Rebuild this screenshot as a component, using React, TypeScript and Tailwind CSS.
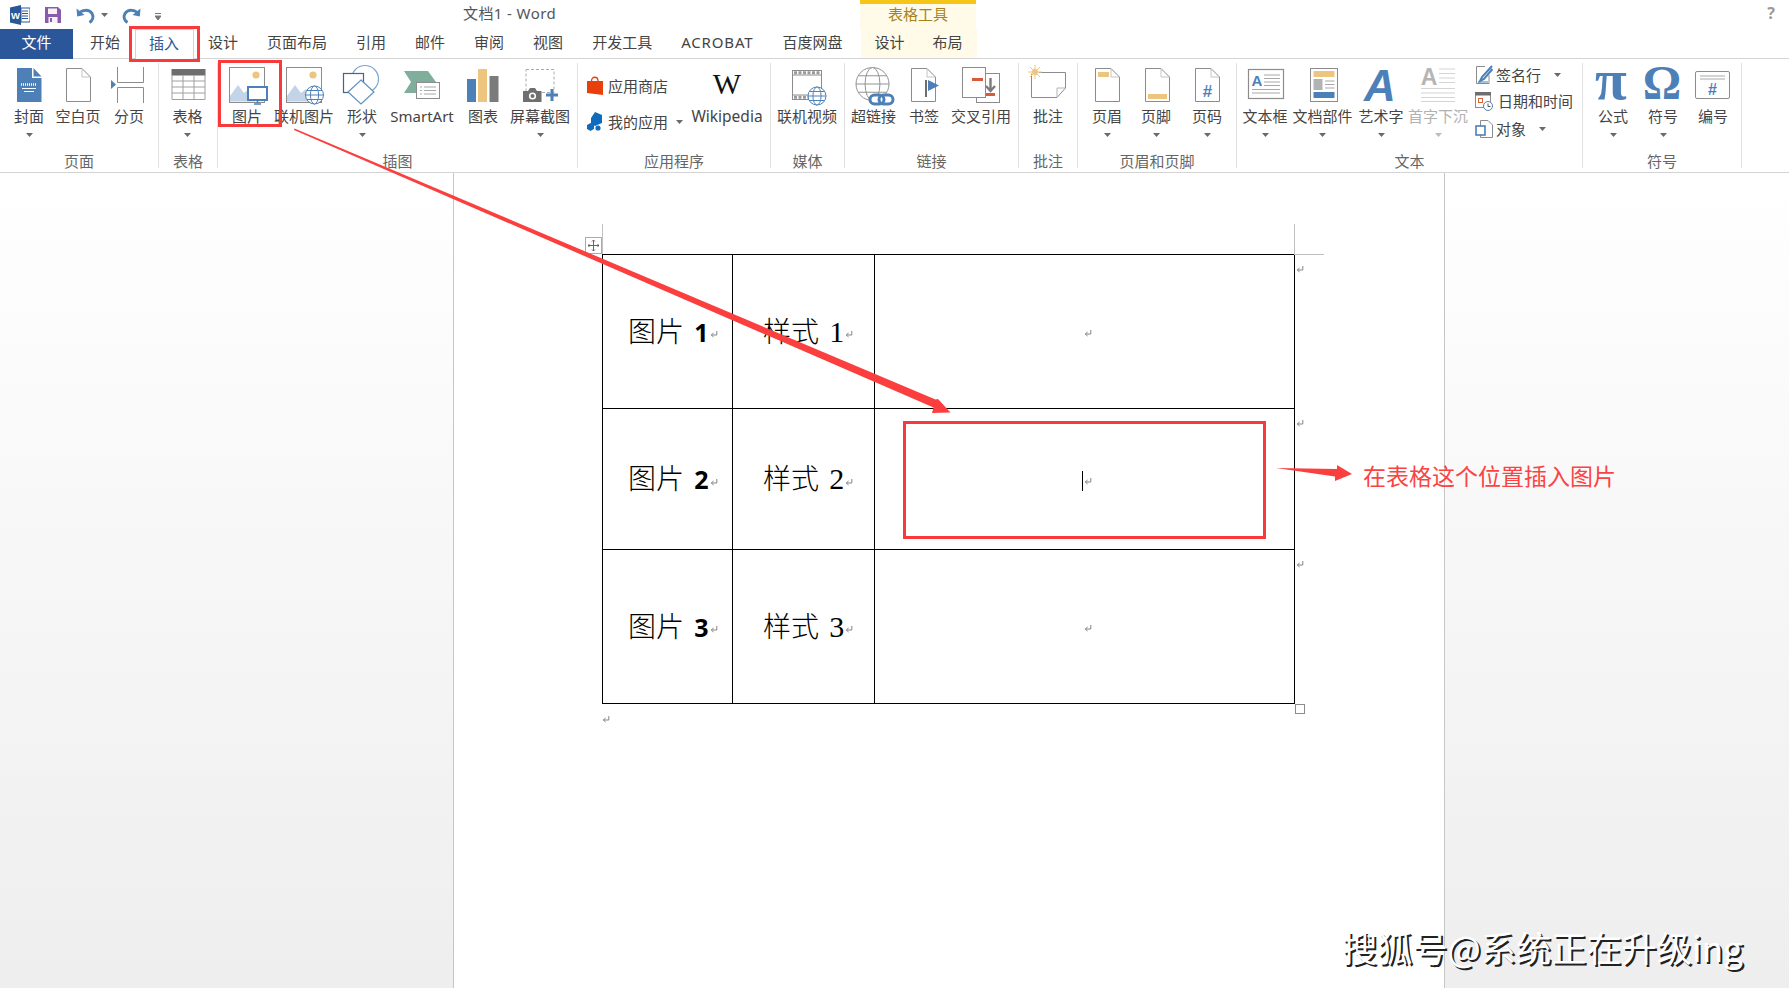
import type { ReactNode } from 'react';

const BLUE = '#4e80b8';
const GRAY = '#8c8c8c';
const GOLD = '#edc57f';

function Ico({ children }: { children: ReactNode }) {
  return (
    <svg width="44" height="44" viewBox="0 0 44 44" fill="none" className="flex-none overflow-visible">
      {children}
    </svg>
  );
}

function Globe({ cx, cy, r, color }: { cx: number; cy: number; r: number; color: string }) {
  return (
    <g stroke={color} strokeWidth="1" fill="white">
      <circle cx={cx} cy={cy} r={r} />
      <ellipse cx={cx} cy={cy} rx={r * 0.45} ry={r} />
      <path d={`M${cx - r} ${cy}H${cx + r}M${cx - r * 0.85} ${cy - r * 0.5}H${cx + r * 0.85}M${cx - r * 0.85} ${cy + r * 0.5}H${cx + r * 0.85}`} />
    </g>
  );
}

function Doc({ x, y = 4, w = 25, h = 34 }: { x: number; y?: number; w?: number; h?: number }) {
  return (
    <>
      <path d={`M${x + 0.5} ${y + 0.5}H${x + w - 9}L${x + w - 0.5} ${y + 9}V${y + h - 0.5}H${x + 0.5}Z`} stroke={GRAY} fill="white" />
      <path d={`M${x + w - 9} ${y + 0.5}V${y + 9}H${x + w - 0.5}`} stroke="#c4c4c4" />
    </>
  );
}

function Picture() {
  return (
    <>
      <rect x="4.5" y="3.5" width="35" height="35" stroke={GRAY} fill="white" />
      <circle cx="31" cy="11" r="3.6" fill={GOLD} />
      <path d="M5 37.5V32L13 21L19 29L24 25L30 37.5Z" fill="#c3d4e8" />
    </>
  );
}

const icons: Record<string, ReactNode> = {
  cover: (
    <Ico>
      <path d="M10 4H25V14H34.5V38H10Z" fill={BLUE} />
      <path d="M26.5 4L34.5 12.5H26.5Z" fill={BLUE} />
      <path d="M14 20.5H30" stroke="white" strokeWidth="2.4" strokeDasharray="1 1" />
      <path d="M15 24.5H29M17 27.5H27" stroke="white" />
    </Ico>
  ),
  blank: <Ico><Doc x={10} /></Ico>,
  pageBreak: (
    <Ico>
      <path d="M10.5 3V18.5H36.5V3M10.5 39V23.5H36.5V39" stroke={GRAY} />
      <path d="M4 16L9 20.5L4 25Z" fill={BLUE} />
    </Ico>
  ),
  table: (
    <Ico>
      <rect x="5.5" y="5" width="34" height="31" fill="white" />
      <rect x="5.5" y="5" width="34" height="6.5" fill="#6e6e6e" />
      <path d="M6 11V35.5H39V11M17 11V35.5M28 11V35.5M6 17H39M6 23H39M6 29H39" stroke="#a0a0a0" />
    </Ico>
  ),
  picture: (
    <Ico>
      <Picture />
      <rect x="23" y="23" width="19" height="13" fill="white" stroke={BLUE} strokeWidth="2" />
      <path d="M32.5 36V39M29 40H36" stroke={BLUE} strokeWidth="1.6" />
    </Ico>
  ),
  onlinePicture: (
    <Ico>
      <Picture />
      <Globe cx={32.5} cy={31} r={9} color={BLUE} />
    </Ico>
  ),
  shapes: (
    <Ico>
      <circle cx="25" cy="15" r="13.5" stroke="#7aa6d0" strokeWidth="1.2" fill="white" />
      <rect x="3.5" y="9.5" width="20" height="19" stroke="#3e6690" strokeWidth="1.2" fill="white" />
      <path d="M21 16L34 28L21 40L8 28Z" stroke="#5f90c2" strokeWidth="1.2" fill="white" />
    </Ico>
  ),
  smartArt: (
    <Ico>
      <path d="M4 7H28L36 18L28 29H4L11 18Z" fill="#7fae9c" />
      <rect x="16.5" y="18.5" width="23" height="16" fill="white" stroke={GRAY} />
      <path d="M20 23H22M24 23H36M20 26.5H22M24 26.5H36M20 30H22M24 30H36" stroke="#a8a8a8" />
    </Ico>
  ),
  chart: (
    <Ico>
      <rect x="6" y="15" width="9" height="23" fill={BLUE} />
      <rect x="17" y="5" width="9" height="33" fill={GOLD} />
      <rect x="28.5" y="12" width="9" height="26" fill="#7b7b7b" />
    </Ico>
  ),
  screenshot: (
    <Ico>
      <rect x="8" y="5.5" width="28" height="23" stroke="#ababab" strokeDasharray="3 2" />
      <path d="M5 27H10L12 24H17L19 27H23.5V38H5Z" fill="#6f6f6f" />
      <circle cx="14.5" cy="32" r="3.6" fill="white" />
      <circle cx="14.5" cy="32" r="2" fill="#6f6f6f" />
      <path d="M34 25V37M28 31H40" stroke={BLUE} strokeWidth="3" />
    </Ico>
  ),
  video: (
    <Ico>
      <rect x="7.5" y="6.5" width="29" height="29" fill="white" stroke={GRAY} />
      <path d="M8 11H36M8 31H36" stroke={GRAY} />
      <path d="M9 8.8H36M9 33.2H36" stroke="#9a9a9a" strokeWidth="3" strokeDasharray="3 1.5" />
      <Globe cx={32} cy={32} r={9} color={BLUE} />
    </Ico>
  ),
  link: (
    <Ico>
      <Globe cx={20.5} cy={20} r={16.5} color="#939393" />
      <rect x="18" y="31" width="14" height="9" rx="4.5" fill="white" stroke={BLUE} strokeWidth="3" />
      <rect x="27" y="31" width="14" height="9" rx="4.5" fill="none" stroke={BLUE} strokeWidth="3" />
    </Ico>
  ),
  bookmark: (
    <Ico>
      <Doc x={9} />
      <path d="M24 16V33" stroke="#6e6e6e" strokeWidth="2" />
      <path d="M26 16L37 21.5L26 27Z" fill={BLUE} />
    </Ico>
  ),
  crossRef: (
    <Ico>
      <rect x="17.5" y="9.5" width="23" height="29" fill="white" stroke={GRAY} />
      <rect x="3.5" y="3.5" width="23" height="30" fill="white" stroke={GRAY} />
      <rect x="13" y="14" width="11" height="3" fill="#d9593d" />
      <rect x="27" y="29" width="9" height="3" fill="#d9593d" />
      <path d="M31.5 14V26M27 22L31.5 27L36 22" stroke="#7b7b7b" strokeWidth="2.4" />
    </Ico>
  ),
  comment: (
    <Ico>
      <path d="M5.5 8.5H39.5V24L31 33.5H5.5Z" fill="white" stroke={GRAY} />
      <path d="M39 24H31V33" stroke="#b4b4b4" />
      <circle cx="9" cy="8" r="3.6" fill={GOLD} stroke="white" />
      <path d="M9 1V15M2 8H16M4 3L14 13M14 3L4 13" stroke={GOLD} />
    </Ico>
  ),
  header: (
    <Ico>
      <Doc x={10} />
      <rect x="13" y="8" width="11" height="5" fill={GOLD} />
    </Ico>
  ),
  footer: (
    <Ico>
      <Doc x={11} />
      <rect x="14" y="30" width="19" height="5" fill={GOLD} />
    </Ico>
  ),
  pageNumber: (
    <Ico>
      <Doc x={10} />
      <text x="22.5" y="33" fontSize="17" fontWeight="700" textAnchor="middle" fill={BLUE} fontFamily="'Liberation Sans', sans-serif">#</text>
    </Ico>
  ),
  textBox: (
    <Ico>
      <rect x="5.5" y="5.5" width="35" height="29" fill="white" stroke={GRAY} strokeWidth="1.2" />
      <text x="14" y="22" fontSize="15" fontWeight="700" textAnchor="middle" fill={BLUE} fontFamily="'Liberation Sans', sans-serif">A</text>
      <path d="M21 11H37M21 14.5H37M21 18H37M21 21.5H37M9 25.5H37M9 29H37" stroke="#a8a8a8" />
    </Ico>
  ),
  quickParts: (
    <Ico>
      <rect x="9.5" y="4.5" width="27" height="33" fill="white" stroke={GRAY} />
      <rect x="12.5" y="7" width="21" height="6" fill={GOLD} />
      <rect x="12.5" y="15" width="9" height="11" fill="#b3b3b3" />
      <path d="M24 17H33.5M24 20.5H33.5M24 24H33.5" stroke="#a8a8a8" />
      <rect x="12.5" y="28" width="21" height="6" fill={BLUE} />
    </Ico>
  ),
  wordArt: (
    <Ico>
      <text x="21" y="37" fontSize="44" fontWeight="700" fontStyle="italic" textAnchor="middle" fill={BLUE} fontFamily="'Liberation Sans', sans-serif">A</text>
    </Ico>
  ),
  dropCap: (
    <Ico>
      <text x="13" y="21" fontSize="23" fontWeight="700" textAnchor="middle" fill="#b5b5b5" fontFamily="'Liberation Sans', sans-serif">A</text>
      <path d="M23 5H39M23 9.5H39M23 14H39M23 18.5H39M5 24.5H39M5 29H39M5 33.5H39M5 37.5H39" stroke="#d4d4d4" />
    </Ico>
  ),
  equation: (
    <Ico>
      <text x="20" y="35" fontSize="58" fontWeight="700" textAnchor="middle" fill={BLUE} fontFamily="'Liberation Serif', serif">π</text>
    </Ico>
  ),
  symbol: (
    <Ico>
      <text x="21" y="35" fontSize="48" fontWeight="700" textAnchor="middle" fill={BLUE} fontFamily="'Liberation Serif', serif">Ω</text>
    </Ico>
  ),
  number: (
    <Ico>
      <rect x="4.5" y="7.5" width="34" height="27" rx="1.5" fill="white" stroke={GRAY} />
      <path d="M9 12H34M9 15H34" stroke="#a8a8a8" />
      <text x="21.5" y="31" fontSize="16" fontWeight="700" textAnchor="middle" fill={BLUE} fontFamily="'Liberation Sans', sans-serif">#</text>
    </Ico>
  ),
};

function Caret({ light }: { light?: boolean }) {
  return (
    <svg width="7" height="4" viewBox="0 0 7 4" className="flex-none">
      <path d="M0 0H7L3.5 4Z" fill={light ? '#bdbdbd' : '#6a6a6a'} />
    </svg>
  );
}

function Btn({ icon, label, caret, disabled, className }: { icon: string; label: string; caret?: boolean; disabled?: boolean; className: string }) {
  return (
    <div className={`flex flex-none flex-col items-center pt-px ${className}`}>
      {icons[icon]}
      <span className={`-mt-[2px] h-[20px] whitespace-nowrap leading-[20px] ${disabled ? 'text-[#b1b1b1]' : ''}`}>{label}</span>
      {caret && (
        <span className="mt-[7px] flex">
          <Caret light={disabled} />
        </span>
      )}
    </div>
  );
}

function Group({ label, className, pad = '', children }: { label: string; className: string; pad?: string; children: ReactNode }) {
  return (
    <div className={`mt-[4px] flex h-[105px] flex-none flex-col border-r border-[#e1e1e1] ${className}`}>
      <div className={`flex flex-1 ${pad}`}>{children}</div>
      <div className="-mb-[3px] h-[20px] text-center leading-[20px] text-[#666666]">{label}</div>
    </div>
  );
}

function ReturnMark({ className = '' }: { className?: string }) {
  return (
    <svg width="8" height="8" viewBox="0 0 8 8" fill="none" className={className}>
      <path d="M6.8 1V5H1.5M3.6 3L1.2 5L3.6 7" stroke="#858585" />
    </svg>
  );
}

const tabs = [
  { label: '开始' },
  { label: '插入', active: true },
  { label: '设计' },
  { label: '页面布局' },
  { label: '引用' },
  { label: '邮件' },
  { label: '审阅' },
  { label: '视图' },
  { label: '开发工具' },
  { label: 'ACROBAT', wide: true },
  { label: '百度网盘' },
];

const rows = [
  { name: '图片', style: '样式', n: '1', h: 'h-[154px]' },
  { name: '图片', style: '样式', n: '2', h: 'h-[141px]' },
  { name: '图片', style: '样式', n: '3', h: 'h-[154px]' },
];

export default function App() {
  return (
    <div className="relative flex h-[988px] w-full flex-col overflow-hidden bg-white font-['Noto_Sans','Noto_Sans_CJK_SC',sans-serif] text-[15px] text-[#444444]">
      {/* Title bar */}
      <div className="flex h-[29px] flex-none">
        <div className="flex w-[463px] flex-none items-center pl-[10px]">
          <svg width="20" height="20" viewBox="0 0 20 20">
            <path d="M0 2.5L11 0V20L0 17.5Z" fill="#2b579a" />
            <path d="M11 3H20V17H11Z" fill="white" stroke="#2b579a" />
            <path d="M12 6H18M12 8.5H18M12 11H18M12 13.5H18" stroke="#2b579a" />
            <text x="5.5" y="14" fontSize="9.5" fontWeight="700" textAnchor="middle" fill="white" fontFamily="'Liberation Sans', sans-serif">W</text>
          </svg>
          <svg width="16" height="16" viewBox="0 0 16 16" className="ml-[15px]">
            <path d="M0 0H13L16 3V16H0Z" fill="#8a5bab" />
            <rect x="3" y="1.5" width="9" height="5.5" fill="#f3f3f3" />
            <rect x="3.5" y="10" width="9" height="6" fill="#f3f3f3" />
            <rect x="5" y="11" width="2" height="4" fill="#8a5bab" />
          </svg>
          <svg width="20" height="18" viewBox="0 0 20 18" fill="none" className="ml-[15px]">
            <path d="M2.5 8C5.5 3.5 13 3 16 7.5C18 11 16.5 14.5 13.5 16.5" stroke={BLUE} strokeWidth="3" />
            <path d="M0.5 2.5L1.2 10.5L8.5 9Z" fill={BLUE} />
          </svg>
          <span className="ml-[5px] flex"><Caret /></span>
          <svg width="20" height="18" viewBox="0 0 20 18" fill="none" className="ml-[13px]">
            <path d="M17.5 8C14.5 3.5 7 3 4 7.5C2 11 3.5 14.5 6.5 16.5" stroke={BLUE} strokeWidth="3" />
            <path d="M19.5 2.5L18.8 10.5L11.5 9Z" fill={BLUE} />
          </svg>
          <svg width="6" height="8" viewBox="0 0 6 8" className="ml-[14px] mt-[4px]">
            <path d="M0 0.5H6M0 3H6L3 7Z" stroke="#777777" strokeWidth="1" fill="#777777" />
          </svg>
        </div>
        <div className="w-[397px] flex-none text-[15px] leading-[27px] tracking-[0.4px] text-[#555555]">文档1 - Word</div>
        <div className="h-[29px] w-[116px] flex-none border-t-[4px] border-[#f5c518] bg-[#fffbe8] text-center text-[15px] leading-[20px] text-[#a8811a]">表格工具</div>
        <div className="flex-1 pr-[14px] text-right text-[16px] font-bold leading-[26px] text-[#9a9a9a]">?</div>
      </div>

      {/* Tabs */}
      <div className="relative z-10 flex h-[30px] flex-none text-[15px] leading-[26px]">
        <div className="w-[73px] flex-none bg-[#2b579a] text-center text-white">文件</div>
        <div className="w-[2.5px] flex-none" />
        {tabs.map((t) =>
          t.active ? (
            <div key={t.label} className="h-[30px] flex-none border-x border-t border-[#d4d4d4] bg-white px-[13.5px] text-[#2b579a]">
              {t.label}
            </div>
          ) : (
            <div key={t.label} className={`flex-none px-[14.5px] ${t.wide ? 'tracking-[0.85px]' : ''}`}>
              {t.label}
            </div>
          ),
        )}
        <div className="w-[3.5px] flex-none" />
        <div className="flex h-[29px] w-[116px] flex-none bg-[#fffbe8]">
          <div className="w-[58px] text-center">设计</div>
          <div className="w-[58px] text-center">布局</div>
        </div>
      </div>

      {/* Ribbon */}
      <div className="-mt-px flex h-[115px] flex-none border-y border-[#d4d4d4] bg-white">
        <Group label="页面" className="w-[159px]" pad="pl-[4px]">
          <Btn icon="cover" label="封面" caret className="w-[50px]" />
          <Btn icon="blank" label="空白页" className="w-[48px]" />
          <Btn icon="pageBreak" label="分页" className="w-[54px]" />
        </Group>
        <Group label="表格" className="w-[59px]">
          <Btn icon="table" label="表格" caret className="w-[57px]" />
        </Group>
        <Group label="插图" className="w-[360px]" pad="pl-[1px]">
          <Btn icon="picture" label="图片" className="w-[56px]" />
          <Btn icon="onlinePicture" label="联机图片" className="w-[58px]" />
          <Btn icon="shapes" label="形状" caret className="w-[58px]" />
          <Btn icon="smartArt" label="SmartArt" className="w-[62px]" />
          <Btn icon="chart" label="图表" className="w-[60px]" />
          <Btn icon="screenshot" label="屏幕截图" caret className="w-[54px]" />
        </Group>
        <Group label="应用程序" className="w-[193px]" pad="pl-[9px]">
          <div className="flex w-[100px] flex-none flex-col gap-[16px] pt-[13px]">
            <div className="flex h-[20px] items-center gap-[5px] leading-[20px]">
              <svg width="16" height="20" viewBox="0 0 16 20" className="flex-none">
                <path d="M4.5 5C4.5 0 11 0 11 5" fill="none" stroke="#e8400c" strokeWidth="1.3" />
                <path d="M0 5H16V19L0 17Z" fill="#e8400c" />
              </svg>
              应用商店
            </div>
            <div className="flex h-[20px] items-center gap-[5px] leading-[20px]">
              <svg width="16" height="20" viewBox="0 0 16 20" className="flex-none">
                <path d="M8 0L15 3V11L8 14L4 12V6Z" fill="#0f6cbd" />
                <path d="M3.5 11L7 13V17L3.5 19L0 17V13Z" fill="#0f6cbd" />
                <circle cx="11" cy="16" r="2.6" fill="#0f6cbd" />
              </svg>
              我的应用
              <span className="ml-[3px] flex"><Caret /></span>
            </div>
          </div>
          <div className="flex w-[80px] flex-none flex-col items-center">
            <span className="mt-[4px] h-[39px] font-['Liberation_Serif',serif] text-[30px] leading-[34px] text-[#111111]">W</span>
            <span className="h-[20px] text-[15.5px] leading-[20px]">Wikipedia</span>
          </div>
        </Group>
        <Group label="媒体" className="w-[74px]">
          <Btn icon="video" label="联机视频" className="w-[72px]" />
        </Group>
        <Group label="链接" className="w-[174px]" pad="pl-[1px]">
          <Btn icon="link" label="超链接" className="w-[55px]" />
          <Btn icon="bookmark" label="书签" className="w-[46px]" />
          <Btn icon="crossRef" label="交叉引用" className="w-[68px]" />
        </Group>
        <Group label="批注" className="w-[59px]">
          <Btn icon="comment" label="批注" className="w-[58px]" />
        </Group>
        <Group label="页眉和页脚" className="w-[159px]" pad="pl-[4px]">
          <Btn icon="header" label="页眉" caret className="w-[50px]" />
          <Btn icon="footer" label="页脚" caret className="w-[48px]" />
          <Btn icon="pageNumber" label="页码" caret className="w-[54px]" />
        </Group>
        <Group label="文本" className="w-[346px]" pad="pl-[1px]">
          <Btn icon="textBox" label="文本框" caret className="w-[54px]" />
          <Btn icon="quickParts" label="文档部件" caret className="w-[61px]" />
          <Btn icon="wordArt" label="艺术字" caret className="w-[56px]" />
          <Btn icon="dropCap" label="首字下沉" caret disabled className="w-[58px]" />
          <div className="ml-[8px] flex flex-none flex-col gap-[6px] pt-[2px]">
            <div className="flex h-[20px] items-center gap-[3px] leading-[20px]">
              <svg width="18" height="20" viewBox="0 0 18 20" fill="none" className="flex-none">
                <path d="M10 1.5H1.5V18.5H14V10" stroke={GRAY} />
                <path d="M17 1L7 12L5 16L9 14L17.5 4" stroke={BLUE} strokeWidth="2" />
                <path d="M3 17H13" stroke={BLUE} />
              </svg>
              签名行
              <span className="ml-[10px] flex"><Caret /></span>
            </div>
            <div className="flex h-[20px] items-center gap-[5px] leading-[20px]">
              <svg width="18" height="20" viewBox="0 0 18 20" fill="none" className="flex-none">
                <rect x="0.5" y="2.5" width="15" height="14" fill="white" stroke={GRAY} />
                <rect x="0" y="1" width="16" height="3.5" fill="#6e6e6e" />
                <rect x="3.5" y="7.5" width="4" height="4" stroke="#d9693d" />
                <circle cx="13" cy="15" r="4.5" fill="white" stroke={BLUE} />
                <path d="M13 12.5V15.5H15.5" stroke="#555555" />
              </svg>
              日期和时间
            </div>
            <div className="mt-[2px] flex h-[20px] items-center gap-[3px] leading-[20px]">
              <svg width="18" height="20" viewBox="0 0 18 20" fill="none" className="flex-none">
                <path d="M5.5 1.5H13L17.5 6V18.5H5.5Z" stroke={GRAY} fill="white" />
                <rect x="1" y="7" width="9" height="9" stroke={BLUE} strokeWidth="1.6" fill="white" />
              </svg>
              对象
              <span className="ml-[10px] flex"><Caret /></span>
            </div>
          </div>
        </Group>
        <Group label="符号" className="w-[159px]" pad="pl-[4px]">
          <Btn icon="equation" label="公式" caret className="w-[52px]" />
          <Btn icon="symbol" label="符号" caret className="w-[48px]" />
          <Btn icon="number" label="编号" className="w-[52px]" />
        </Group>
      </div>

      {/* Document area */}
      <div className="flex-1 bg-linear-to-b from-white to-[#eeeeee] pl-[453px]">
        <div className="h-full w-[992px] border-x border-[#c6c6c6] bg-white pl-[148px] pt-[81px]">
          <div className="relative w-[693px] text-black">
            {/* table move handle and crop marks */}
            <div className="absolute -left-[17px] -top-[17px] flex h-[17px] w-[17px] items-center justify-center border border-[#ababab] bg-white">
              <svg width="11" height="11" viewBox="0 0 11 11" fill="none">
                <path d="M5.5 0V11M0 5.5H11M4 1.5L5.5 0L7 1.5M4 9.5L5.5 11L7 9.5M1.5 4L0 5.5L1.5 7M9.5 4L11 5.5L9.5 7" stroke="#666666" />
              </svg>
            </div>
            <div className="absolute -top-[30px] left-0 h-[30px] w-px bg-[#c0c0c0]" />
            <div className="absolute -top-[30px] left-[692px] h-[30px] w-px bg-[#c0c0c0]" />
            <div className="absolute left-[692px] top-0 h-px w-[30px] bg-[#c0c0c0]" />

            <table className="w-[693px] table-fixed border-collapse">
              <colgroup>
                <col className="w-[130px]" />
                <col className="w-[142px]" />
                <col />
              </colgroup>
              <tbody>
                {rows.map((r) => (
                  <tr key={r.n} className={r.h}>
                    <td className="border border-black pl-[25px] align-middle">
                      <span className="whitespace-nowrap font-['Noto_Sans_CJK_SC',sans-serif] text-[28px] font-light leading-none">
                        {r.name} <span className="ml-[4px] font-['Open_Sans',sans-serif] text-[25px] font-bold">{r.n}</span>
                        <ReturnMark className="ml-[1px] inline" />
                      </span>
                    </td>
                    <td className="border border-black pl-[30px] align-middle">
                      <span className="whitespace-nowrap font-['Noto_Sans_CJK_SC',sans-serif] text-[28px] font-light leading-none">
                        {r.style} <span className="ml-[4px] font-['Liberation_Serif',serif] text-[30px]">{r.n}</span>
                        <ReturnMark className="ml-[1px] inline" />
                      </span>
                    </td>
                    <td className="relative border border-black text-center align-middle">
                      <span className="relative ml-[7px] inline-flex h-[20px] items-center">
                        {r.n === '2' && <span className="absolute -left-[2px] top-0 h-[20px] w-px bg-black" />}
                        <ReturnMark />
                      </span>
                      <ReturnMark className="absolute -right-[10px] top-[10px]" />
                    </td>
                  </tr>
                ))}
              </tbody>
            </table>
            <div className="absolute left-[693px] top-[450px] h-[10px] w-[10px] border border-[#8c8c8c] bg-white" />
            <div className="mt-[11px] flex"><ReturnMark /></div>
          </div>
        </div>
      </div>

      {/* Annotations drawn on top of the screenshot */}
      <div className="absolute left-[129px] top-[26px] h-[36px] w-[71px] border-[3px] border-[#f93a3a]" />
      <div className="absolute left-[218px] top-[60px] h-[67px] w-[64px] border-[3px] border-[#f93a3a]" />
      <div className="absolute left-[903px] top-[421px] h-[118px] w-[363px] border-[3px] border-[#f93a3a]" />
      <svg width="1789" height="988" viewBox="0 0 1789 988" className="absolute left-0 top-0">
        <path d="M294.5 128.5L935.5 399.5L938 399L950.5 412.5L932 413L933.5 407.5L294 130Z" fill="#fb3e3e" />
        <path d="M1276 468L1337 469V465L1352 474L1335 481V476.5Z" fill="#fb3e3e" />
      </svg>
      <div className="absolute left-[1363px] top-[459px] whitespace-nowrap font-['Noto_Sans_CJK_SC',sans-serif] text-[23px] leading-[32px] text-[#fb4343]">
        在表格这个位置插入图片
      </div>
      <div className="absolute left-[1342px] top-[923px] whitespace-nowrap font-['Noto_Sans_CJK_SC',sans-serif] text-[35.2px] leading-[48px] text-white [text-shadow:2px_2px_0_#222222]">
        搜狐号@系统正在升级ing
      </div>
    </div>
  );
}
